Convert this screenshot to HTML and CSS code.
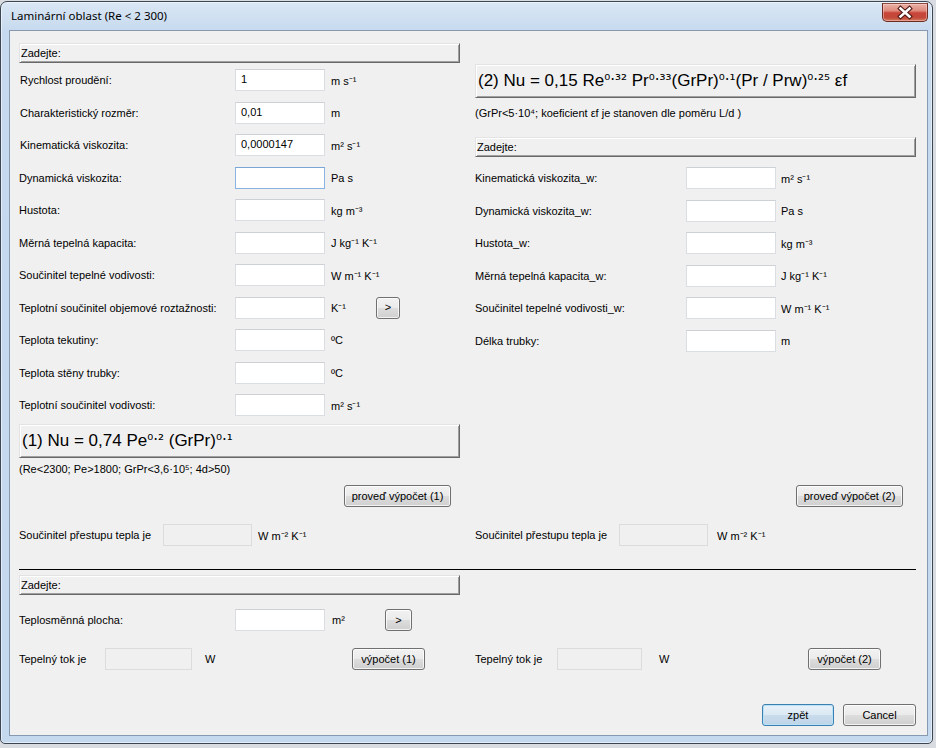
FILE: index.html
```html
<!DOCTYPE html>
<html lang="cs">
<head>
<meta charset="utf-8">
<title>Laminární oblast</title>
<link rel="stylesheet" href="styles.css">
</head>
<body>
<div class="window">
  <div class="titlebar">
    <span class="title">Laminární oblast (Re &lt; 2 300)</span>
    <div class="close">
      <svg width="44" height="17" viewBox="0 0 44 17">
        <path d="M17.5 4.5 L26.5 12.5 M26.5 4.5 L17.5 12.5" stroke="#4a1510" stroke-width="4.6" stroke-linecap="square"/>
        <path d="M17.5 4.5 L26.5 12.5 M26.5 4.5 L17.5 12.5" stroke="#ffffff" stroke-width="2.6" stroke-linecap="square"/>
      </svg>
    </div>
  </div>
  <div class="client">
    <div class="top">
      <div class="col">
        <div class="group-head">Zadejte:</div>
        <div class="rows">
          <div class="row"><span class="label ind">Rychlost proudění:</span><input class="tb" type="text" value="1"><span class="unit">m s⁻¹</span></div>
          <div class="row"><span class="label ind">Charakteristický rozměr:</span><input class="tb" type="text" value="0,01"><span class="unit">m</span></div>
          <div class="row"><span class="label ind">Kinematická viskozita:</span><input class="tb" type="text" value="0,0000147"><span class="unit">m² s⁻¹</span></div>
          <div class="row"><span class="label">Dynamická viskozita:</span><input class="tb focus" type="text" value=""><span class="unit">Pa s</span></div>
          <div class="row"><span class="label">Hustota:</span><input class="tb" type="text" value=""><span class="unit">kg m⁻³</span></div>
          <div class="row"><span class="label">Měrná tepelná kapacita:</span><input class="tb" type="text" value=""><span class="unit">J kg⁻¹ K⁻¹</span></div>
          <div class="row"><span class="label">Součinitel tepelné vodivosti:</span><input class="tb" type="text" value=""><span class="unit">W m⁻¹ K⁻¹</span></div>
          <div class="row"><span class="label">Teplotní součinitel objemové roztažnosti:</span><input class="tb" type="text" value=""><span class="unit">K⁻¹</span><button class="btn btn-arrow">&gt;</button></div>
          <div class="row"><span class="label">Teplota tekutiny:</span><input class="tb" type="text" value=""><span class="unit">ºC</span></div>
          <div class="row"><span class="label">Teplota stěny trubky:</span><input class="tb" type="text" value=""><span class="unit">ºC</span></div>
          <div class="row"><span class="label">Teplotní součinitel vodivosti:</span><input class="tb" type="text" value=""><span class="unit">m² s⁻¹</span></div>
        </div>
        <div class="formula formula-1">(1) Nu = 0,74 Pe<span class="sup">⁰·²</span>&nbsp;(GrPr)<span class="sup">⁰·¹</span></div>
        <div class="note">(Re&lt;2300; Pe&gt;1800; GrPr&lt;3,6·10⁵; 4d&gt;50)</div>
      </div>
      <div class="col col-right">
        <div class="formula formula-2">(2) Nu = 0,15 Re<span class="sup">⁰·³²</span>&nbsp;Pr<span class="sup">⁰·³³</span>(GrPr)<span class="sup">⁰·¹</span>(Pr / Prw)<span class="sup">⁰·²⁵</span>&nbsp;εf</div>
        <div class="note note-2">(GrPr&lt;5·10⁴; koeficient εf je stanoven dle poměru L/d )</div>
        <div class="group-head head-2">Zadejte:</div>
        <div class="rows rows-2">
          <div class="row"><span class="label">Kinematická viskozita_w:</span><input class="tb" type="text" value=""><span class="unit">m² s⁻¹</span></div>
          <div class="row"><span class="label">Dynamická viskozita_w:</span><input class="tb" type="text" value=""><span class="unit">Pa s</span></div>
          <div class="row"><span class="label">Hustota_w:</span><input class="tb" type="text" value=""><span class="unit">kg m⁻³</span></div>
          <div class="row"><span class="label">Měrná tepelná kapacita_w:</span><input class="tb" type="text" value=""><span class="unit">J kg⁻¹ K⁻¹</span></div>
          <div class="row"><span class="label">Součinitel tepelné vodivosti_w:</span><input class="tb" type="text" value=""><span class="unit">W m⁻¹ K⁻¹</span></div>
          <div class="row"><span class="label">Délka trubky:</span><input class="tb" type="text" value=""><span class="unit">m</span></div>
        </div>
      </div>
    </div>

    <div class="pair calc-row">
      <div class="half half-end"><button class="btn btn-calc">proveď výpočet (1)</button></div>
      <div class="half half-end half-end-2"><button class="btn btn-calc">proveď výpočet (2)</button></div>
    </div>

    <div class="pair result-row">
      <div class="half result"><span class="label">Součinitel přestupu tepla je</span><input class="tb tb-res" type="text" value="" disabled><span class="unit">W m⁻² K⁻¹</span></div>
      <div class="half result result-2"><span class="label">Součinitel přestupu tepla je</span><input class="tb tb-res" type="text" value="" disabled><span class="unit">W m⁻² K⁻¹</span></div>
    </div>

    <div class="sep"></div>

    <div class="group-head head-3">Zadejte:</div>
    <div class="row row-area"><span class="label">Teplosměnná plocha:</span><input class="tb" type="text" value=""><span class="unit">m²</span><button class="btn btn-arrow btn-arrow-2">&gt;</button></div>

    <div class="pair flow-row">
      <div class="half flow"><span class="label">Tepelný tok je</span><input class="tb tb-flow" type="text" value="" disabled><span class="unit">W</span><button class="btn btn-small">výpočet (1)</button></div>
      <div class="half flow flow-2"><span class="label">Tepelný tok je</span><input class="tb tb-flow" type="text" value="" disabled><span class="unit">W</span><button class="btn btn-small">výpočet (2)</button></div>
    </div>

    <div class="dlg-buttons">
      <button class="btn btn-dlg btn-default">zpět</button>
      <button class="btn btn-dlg btn-cancel">Cancel</button>
    </div>
  </div>
</div>
</body>
</html>
```

FILE: styles.css
```css
* { box-sizing: border-box; }
html, body { margin: 0; padding: 0; }
body {
  width: 936px;
  height: 748px;
  overflow: hidden;
  background: #d9dde1;
  font-family: "Liberation Sans", Arial, sans-serif;
  font-size: 11px;
  color: #000;
}

.window {
  margin-top: 1px;
  width: 933px;
  height: 743px;
  border: 1px solid #3d4753;
  border-radius: 7px 7px 5px 5px;
  background: linear-gradient(to bottom, #dae7f5 0px, #c6d9ee 30px, #c4d8ee 100%);
  padding: 0 4px 7px 8px;
  display: flex;
  flex-direction: column;
  box-shadow: inset 0 0 0 1px rgba(255,255,255,0.55);
}

.titlebar {
  height: 28px;
  flex: none;
  display: flex;
  align-items: center;
  justify-content: space-between;
  padding-left: 2px;
}
.title {
  font-family: "Noto Sans", "Open Sans", sans-serif;
  font-size: 11.5px;
  color: #000;
  padding-bottom: 1px;
}
.close {
  align-self: flex-start;
  margin-top: 1px;
  width: 46px;
  height: 19px;
  border: 1px solid #6b2a22;
  border-top-color: #8a4a42;
  border-radius: 0 0 5px 5px;
  background: linear-gradient(to bottom, #eab2a8 0%, #de8a7c 40%, #c9443a 52%, #c24a3a 80%, #d27a5e 100%);
  box-shadow: inset 0 0 0 1px rgba(255,220,210,0.45);
  display: flex;
  align-items: center;
  justify-content: center;
}
.close svg { display: block; }

.client {
  flex: 1;
  border: 1px solid #8699ae;
  background: #f0f0f0;
  padding: 12px 0 0 9px;
  display: flex;
  flex-direction: column;
}

.top {
  display: flex;
  gap: 15px;
}
.col {
  width: 441px;
  display: flex;
  flex-direction: column;
}

.group-head {
  width: 441px;
  height: 20px;
  flex: none;
  border: 1px solid;
  border-color: #e3e3e3 #696969 #696969 #e3e3e3;
  box-shadow: inset 1px 1px 0 #ffffff, inset -1px -1px 0 #a0a0a0;
  background: #f0f0f0;
  padding-left: 1px;
  line-height: 18px;
}

.rows {
  margin-top: 6px;
  display: flex;
  flex-direction: column;
  gap: 10.5px;
}
.row {
  height: 22px;
  display: grid;
  grid-template-columns: 216px 90px 51px auto;
  align-items: center;
}
.label { white-space: nowrap; }
.label.ind { padding-left: 1px; }
.unit { padding-left: 6px; white-space: nowrap; }

.tb {
  width: 90px;
  height: 22px;
  margin: 0;
  border: 1px solid #dadde2;
  border-top-color: #cdd1d6;
  background: #fff;
  padding: 0 5px 2px;
  font-family: "Liberation Sans", Arial, sans-serif;
  font-size: 11px;
  color: #000;
  outline: none;
}
.tb.focus { border-color: #8ab4df; border-top-color: #7aa6d6; }
.tb:disabled, .tb-res, .tb-flow {
  background: #f0f0f0;
  border-color: #dcdcdc;
}

.formula {
  height: 34px;
  flex: none;
  border: 1px solid;
  border-color: #e3e3e3 #696969 #696969 #e3e3e3;
  box-shadow: inset 1px 1px 0 #ffffff, inset -1px -1px 0 #a0a0a0;
  background: #f0f0f0;
  font-size: 17px;
  padding: 0 0 1px 2px;
  display: flex;
  align-items: center;
  white-space: pre;
}
.sup {
  font-family: "DejaVu Sans", sans-serif;
  font-size: 15px;
  position: relative;
  top: -1px;
}
.formula-1 { margin-top: 8px; }
.note {
  margin-top: 4px;
  height: 14px;
  line-height: 14px;
  white-space: nowrap;
}

.col-right .formula-2 { margin-top: 21px; }
.note-2 { margin-top: 8px; }
.head-2 { margin-top: 17px; }
.rows-2 { margin-top: 10px; }
.col-right .row { grid-template-columns: 211px 90px auto; }
.col-right .unit { padding-left: 5px; }

.btn {
  margin: 0;
  height: 22px;
  border: 1px solid #707070;
  border-radius: 3px;
  background: linear-gradient(to bottom, #f2f2f2 0%, #ebebeb 48%, #dddddd 52%, #cfcfcf 100%);
  box-shadow: inset 0 0 0 1px rgba(255,255,255,0.75);
  font-family: "Liberation Sans", Arial, sans-serif;
  font-size: 11px;
  color: #000;
  padding: 0 0 1px;
  text-align: center;
}
.btn-arrow { width: 24px; }
.btn-arrow-2 { width: 27px; }

.pair {
  display: flex;
  gap: 15px;
}
.half {
  width: 441px;
  display: flex;
  align-items: center;
}
.calc-row { margin-top: 9px; }
.half-end { justify-content: flex-end; padding-right: 9px; }
.half-end-2 { padding-right: 13px; }
.btn-calc { width: 107px; }

.result-row { margin-top: 17px; }
.result {
  display: grid;
  grid-template-columns: 144px 89px auto;
  height: 22px;
}
.tb-res { width: 89px; }
.result-2 .unit { padding-left: 9px; }

.sep {
  margin-top: 23px;
  width: 897px;
  height: 1px;
  background: #000;
  flex: none;
}
.head-3 { margin-top: 5px; }

.row-area {
  margin-top: 14px;
  grid-template-columns: 216px 90px 60px 27px;
}
.row-area .unit { padding-left: 7px; }

.flow-row { margin-top: 17px; }
.flow {
  display: grid;
  grid-template-columns: 86px 87px 160px 73px;
  height: 22px;
}
.flow .unit { padding-left: 13px; }
.flow-2 { grid-template-columns: 82px 85px 166px 73px; }
.flow-2 .unit { padding-left: 17px; }
.tb-flow { width: 87px; }
.flow-2 .tb-flow { width: 85px; }
.btn-small { width: 73px; }

.dlg-buttons {
  margin-top: 34px;
  display: flex;
  justify-content: flex-end;
  gap: 9px;
  padding-right: 11px;
}
.btn-dlg { width: 72px; }
.btn-cancel { width: 73px; }
.btn-default {
  border-color: #3c7fb1;
  background: linear-gradient(to bottom, #e8f1f8 0%, #dbe9f4 48%, #c9dcec 52%, #bdd4e7 100%);
  box-shadow: inset 0 0 0 1px #b9e2f6;
}
```
